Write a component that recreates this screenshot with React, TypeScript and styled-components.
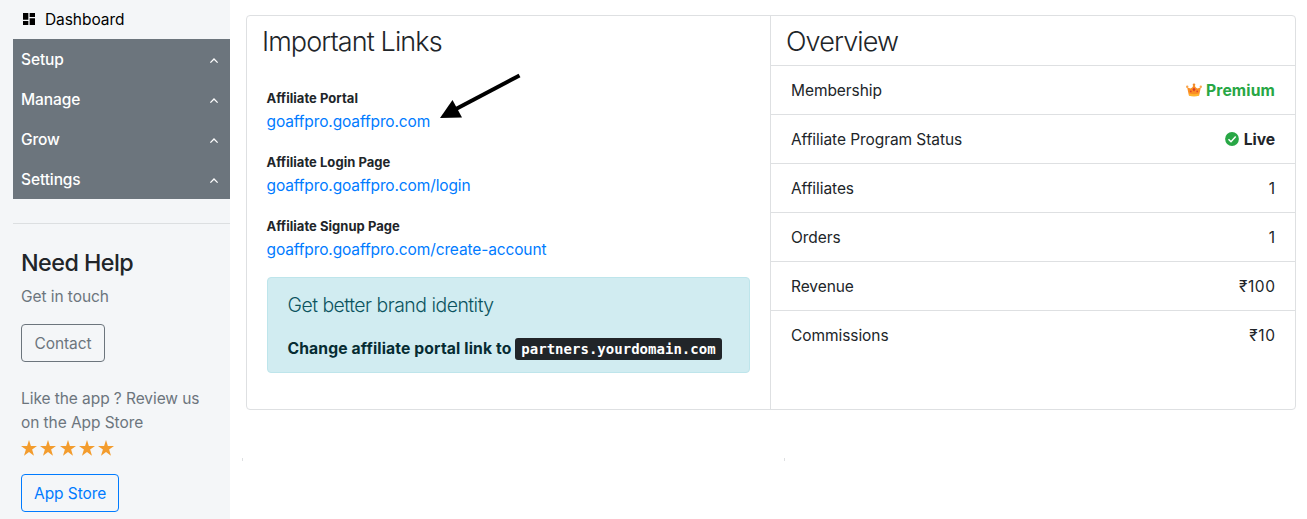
import React from "react";
import styled, { createGlobalStyle, css } from "styled-components";

const GlobalStyle = createGlobalStyle`
  *, *::before, *::after { box-sizing: border-box; }
  body {
    margin: 0;
    overflow: hidden;
    background: #fff;
    color: #212529;
    font-family: Inter, "Liberation Sans", sans-serif;
    font-size: 15.5px;
    line-height: 24px;
    letter-spacing: -0.07px;
  }
  h1, h2, h3, h4, p, ul, dl, dd, dt { margin: 0; padding: 0; font-weight: inherit; }
  a { color: #007bff; text-decoration: none; }
`;

const Page = styled.div`
  display: flex;
  height: 519px;
  overflow: hidden;
`;

const Sidebar = styled.aside`
  flex: 0 0 230px;
  padding-left: 13px;
  background: #f4f6f8;
`;

const DashboardLink = styled.div`
  display: flex;
  align-items: center;
  height: 39px;
  padding-left: 8px;
  color: #000;

  svg { width: 16px; height: 16px; margin: -1px 8px 0 0; }
`;

const Menu = styled.nav`
  background: #6c757d;
`;

const MenuItem = styled.div`
  display: flex;
  align-items: center;
  justify-content: space-between;
  height: 40px;
  padding: 2px 11px 0 8px;
  color: #fff;
  font-weight: 500;
  letter-spacing: -0.1px;

  svg { width: 10px; height: 10px; margin-top: 2px; }
`;

const Divider = styled.hr`
  margin: 24px 0 0;
  border: 0;
  border-top: 1px solid #dcdfe1;
`;

const Help = styled.section`
  display: flex;
  flex-direction: column;
  align-items: flex-start;
  padding: 24px 8px 0;
  color: #6c757d;
`;

const HelpTitle = styled.h4`
  margin-bottom: 8px;
  color: #212529;
  font-size: 23.3px;
  font-weight: 500;
  line-height: 29px;
  letter-spacing: -0.52px;
`;

const HelpText = styled.p`
  white-space: nowrap;
`;

const OutlineButton = styled.button<{ $tone: "grey" | "blue" }>`
  flex: none;
  height: 38px;
  padding: 2px 12px 0;
  border: 1px solid;
  border-radius: 4px;
  background: transparent;
  color: ${(p) => (p.$tone === "blue" ? "#007bff" : "#6c757d")};
  width: ${(p) => (p.$tone === "blue" ? 98 : 84)}px;
  margin: ${(p) => (p.$tone === "blue" ? "18px 0 0" : "15px 0 25px")};
  font: inherit;
  letter-spacing: -0.05px;
  white-space: nowrap;
`;

const Stars = styled.div`
  display: flex;
  gap: 3.3px;
  height: 16px;
  margin-top: 5px;
  color: #f39c2d;

  svg { width: 16px; height: 16px; }
`;

const Main = styled.main`
  flex: 1;
  padding: 15px 11px 0 12px;
`;

const Card = styled.div`
  display: grid;
  grid-template-columns: 523px 1fr;
  height: 395px;
  margin-left: 4px;
  border: 1px solid #dee0e2;
  border-radius: 4px;
`;

const LinksPanel = styled.section`
  position: relative;
`;

const OverviewPanel = styled.section`
  border-left: 1px solid #dee0e2;
`;

const PanelTitle = styled.h3`
  height: 49px;
  padding: 8px 15px;
  font-size: 27px;
  font-weight: 300;
  line-height: 35px;
  letter-spacing: -0.9px;
`;

const LinkList = styled.dl`
  padding: 22px 20px 0 19.5px;
`;

const LinkEntry = styled.div`
  height: 64px;

  dt {
    font-size: 13px;
    font-weight: 700;
    line-height: 22px;
    letter-spacing: 0.04px;
  }

  dd {
    padding-top: 1px;
    letter-spacing: -0.13px;
  }
`;

const Notice = styled.div`
  height: 96px;
  margin: -2px 20px 0;
  padding: 15px 19.5px;
  border: 1px solid #bee5eb;
  border-radius: 4px;
  background: #d1ecf1;
  color: #0c5460;

  h4 {
    margin-bottom: 19px;
    font-size: 19.4px;
    font-weight: 300;
    line-height: 24px;
    letter-spacing: -0.49px;
  }
`;

const NoticeAction = styled.p`
  display: flex;
  align-items: center;
  color: #062c33;
  font-size: 15.7px;
  font-weight: 700;
  letter-spacing: 0.12px;
  white-space: nowrap;
`;

const NoticeLabel = styled.span`
  padding-top: 1px;
`;

const Domain = styled.code`
  height: 22px;
  margin-left: 3.5px;
  padding: 0 6.4px;
  border-radius: 3px;
  background: #212529;
  color: #fff;
  font: 700 14px/22px "DejaVu Sans Mono", monospace;
  letter-spacing: 0.02px;
`;

const StatRow = styled.div`
  display: flex;
  align-items: center;
  justify-content: space-between;
  height: 49px;
  padding: 1px 20px 0;
  border-top: 1px solid #dee0e2;
`;

const StatValue = styled.span<{ $kind?: "premium" | "live" | "money" }>`
  display: flex;
  align-items: center;

  ${(p) =>
    (p.$kind === "premium" || p.$kind === "live") &&
    css`
      color: ${p.$kind === "premium" ? "#28a745" : "#212529"};
      font-size: 15.7px;
      font-weight: 700;
      letter-spacing: ${p.$kind === "premium" ? 0.12 : -0.1}px;
    `}
  ${(p) =>
    p.$kind === "money" &&
    css`
      margin-right: -0.6px;
      letter-spacing: 0.6px;
    `}
`;

const CrownIcon = styled.svg`
  width: 16px;
  height: 14px;
  margin: -1px 4px 0 0;
`;

const CheckIcon = styled.svg`
  width: 14px;
  height: 14px;
  margin: -1px 4.5px 0 0;
`;

const Arrow = styled.svg`
  position: absolute;
  left: 193px;
  top: 56px;
  width: 84px;
  height: 50px;
`;

const NextRow = styled.div`
  display: grid;
  grid-template-columns: 542px 1fr;
  height: 3px;
  margin-top: 48px;
`;

const PanelEdge = styled.div`
  border-left: 1px solid #dee0e2;
`;

const Chevron = () => (
  <svg viewBox="0 0 10 10" fill="none" stroke="#fff" strokeWidth="1.3">
    <path d="M1.4 6.6 5 3 8.6 6.6" />
  </svg>
);

const Star = () => (
  <svg viewBox="0 0 16 16" fill="currentColor">
    <path d="M8 0 9.9 5.9H16.1L11.1 9.6 13 15.7 8 12 3 15.7 4.9 9.6-.1 5.9H6.1z" />
  </svg>
);

const Crown = () => (
  <CrownIcon viewBox="0 0 16 14">
    <path d="M2.9 12.6 1.2 4.4 4.6 5.4 6.2 4.6 8 1.6 9.8 4.6 11.4 5.4 14.8 4.4 13.1 12.6Q8 13.8 2.9 12.6z" fill="#fb8f24" />
    <path d="M3 10.6Q8 12 13 10.6L12.8 12.7Q8 13.9 3.2 12.7z" fill="#ffb52e" />
    <circle cx="1.2" cy="3.8" r="1.2" fill="#f9a44a" />
    <circle cx="14.8" cy="3.8" r="1.2" fill="#f9a44a" />
    <circle cx="8" cy="1.8" r="1.3" fill="#f08a2a" />
    <path d="M8 4.4 9.5 6.4 8 8.4 6.5 6.4z" fill="#d63a2f" />
    <circle cx="4.8" cy="8.4" r="0.9" fill="#e2452c" />
    <circle cx="11.2" cy="8.4" r="0.9" fill="#e2452c" />
  </CrownIcon>
);

const Check = () => (
  <CheckIcon viewBox="0 0 14 14">
    <circle cx="7" cy="7" r="6.9" fill="#28a745" />
    <path d="M3.5 7.2 6 9.7 10.7 4.6" fill="none" stroke="#fff" strokeWidth="1.5" />
  </CheckIcon>
);

const menu = ["Setup", "Manage", "Grow", "Settings"];

const links = [
  ["Affiliate Portal", "goaffpro.goaffpro.com"],
  ["Affiliate Login Page", "goaffpro.goaffpro.com/login"],
  ["Affiliate Signup Page", "goaffpro.goaffpro.com/create-account"],
];

export default function App() {
  return (
    <>
      <GlobalStyle />
      <Page>
        <Sidebar>
          <DashboardLink>
            <svg viewBox="0 0 24 24" fill="currentColor">
              <path d="M3 13h8V3H3v10zm0 8h8v-6H3v6zm10 0h8V11h-8v10zm0-18v6h8V3h-8z" />
            </svg>
            Dashboard
          </DashboardLink>
          <Menu>
            {menu.map((name) => (
              <MenuItem key={name}>
                {name}
                <Chevron />
              </MenuItem>
            ))}
          </Menu>
          <Divider />
          <Help>
            <HelpTitle>Need Help</HelpTitle>
            <HelpText>Get in touch</HelpText>
            <OutlineButton $tone="grey">Contact</OutlineButton>
            <HelpText>
              Like the app ? Review us
              <br />
              on the App Store
            </HelpText>
            <Stars>
              {[1, 2, 3, 4, 5].map((n) => (
                <Star key={n} />
              ))}
            </Stars>
            <OutlineButton $tone="blue">App Store</OutlineButton>
          </Help>
        </Sidebar>
        <Main>
          <Card>
            <LinksPanel>
              <PanelTitle>Important Links</PanelTitle>
              <LinkList>
                {links.map(([label, url]) => (
                  <LinkEntry key={label}>
                    <dt>{label}</dt>
                    <dd>
                      <a href="#">{url}</a>
                    </dd>
                  </LinkEntry>
                ))}
              </LinkList>
              <Notice>
                <h4>Get better brand identity</h4>
                <NoticeAction>
                  <NoticeLabel>Change affiliate portal link to</NoticeLabel>
                  <Domain>partners.yourdomain.com</Domain>
                </NoticeAction>
              </Notice>
              <Arrow viewBox="0 0 84 50">
                <path d="M79.5 3.5 15 37.5" stroke="#000" strokeWidth="4" />
                <path d="M0 46 12.5 28 22 45.5z" fill="#000" />
              </Arrow>
            </LinksPanel>
            <OverviewPanel>
              <PanelTitle>Overview</PanelTitle>
              <StatRow>
                Membership
                <StatValue $kind="premium">
                  <Crown />
                  Premium
                </StatValue>
              </StatRow>
              <StatRow>
                Affiliate Program Status
                <StatValue $kind="live">
                  <Check />
                  Live
                </StatValue>
              </StatRow>
              <StatRow>
                Affiliates<StatValue>1</StatValue>
              </StatRow>
              <StatRow>
                Orders<StatValue>1</StatValue>
              </StatRow>
              <StatRow>
                Revenue<StatValue $kind="money">₹100</StatValue>
              </StatRow>
              <StatRow>
                Commissions<StatValue $kind="money">₹10</StatValue>
              </StatRow>
            </OverviewPanel>
          </Card>
          <NextRow>
            <PanelEdge />
            <PanelEdge />
          </NextRow>
        </Main>
      </Page>
    </>
  );
}
